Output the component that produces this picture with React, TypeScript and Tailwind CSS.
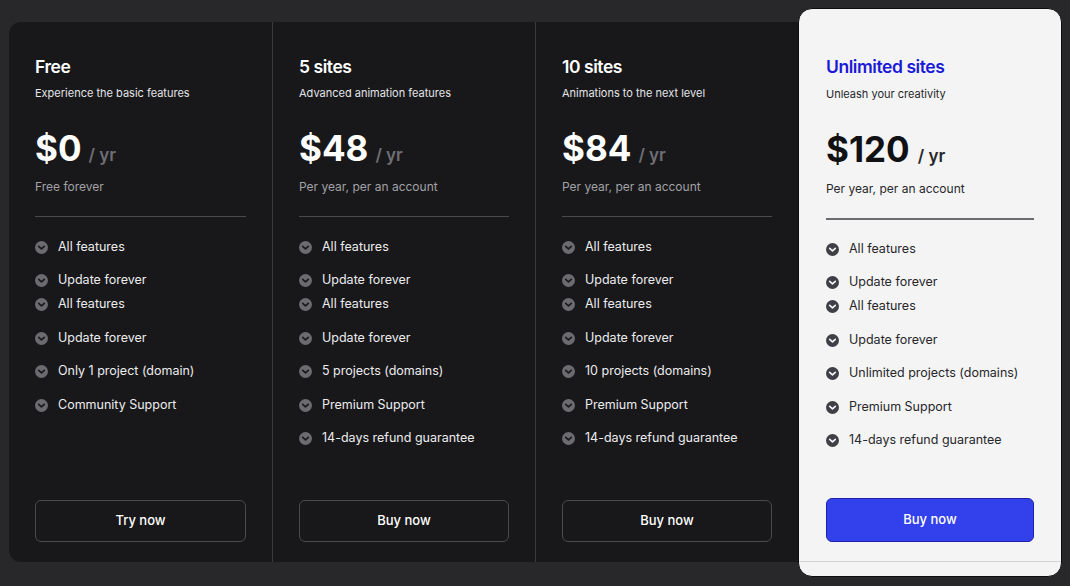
const plans = [
  { name: "Free", sub: "Experience the basic features", price: "$0", note: "Free forever", extra: ["Only 1 project (domain)", "Community Support"], cta: "Try now" },
  { name: "5 sites", sub: "Advanced animation features", price: "$48", note: "Per year, per an account", extra: ["5 projects (domains)", "Premium Support", "14-days refund guarantee"], cta: "Buy now" },
  { name: "10 sites", sub: "Animations to the next level", price: "$84", note: "Per year, per an account", extra: ["10 projects (domains)", "Premium Support", "14-days refund guarantee"], cta: "Buy now" },
];

const base = ["All features", "Update forever", "All features", "Update forever"];

function Icon({ light }: { light?: boolean }) {
  return (
    <svg width="13" height="13" viewBox="0 0 14 14" className="shrink-0">
      <circle cx="7" cy="7" r="7" fill={light ? "#3f3f46" : "#6b6b70"} />
      <path d="M4 5.8 L7 8.6 L10 5.8" fill="none" stroke={light ? "#f4f4f5" : "#1b1b1d"} strokeWidth="1.8" strokeLinecap="round" strokeLinejoin="round" />
    </svg>
  );
}

function Features({ items, light }: { items: string[]; light?: boolean }) {
  return (
    <ul className="flex flex-col">
      {items.map((f, i) => (
        <li key={i} className={`flex items-center gap-[10px] h-[24px] text-[12.5px] ${i === 0 ? "" : i === 2 ? "mt-0" : "mt-[9.5px]"} ${light ? "text-[#27272a]" : "text-[#ececee]"}`}>
          <Icon light={light} />
          <span>{f}</span>
        </li>
      ))}
    </ul>
  );
}

export default function App() {
  return (
    <div className="w-[1070px] h-[586px] bg-[#28282a] flex items-start pl-[9px] overflow-hidden" style={{ fontFamily: "Inter, 'Liberation Sans', sans-serif" }}>
      <div className="mt-[22px] h-[540px] w-[790px] bg-[#18181a] rounded-l-[12px] flex">
        {plans.map((p, i) => (
          <div key={i} className={`w-[263px] flex flex-col px-[26px] pt-[34px] pb-[20px] ${i > 0 ? "border-l border-[#3a3a3d]" : ""}`}>
            <h2 className="text-[17.5px] font-semibold text-white leading-[22px] tracking-tight">{p.name}</h2>
            <p className="text-[11px] text-[#e4e4e7] mt-[7px]">{p.sub}</p>
            <div className="flex items-baseline gap-[7px] mt-[26px]">
              <span className="text-[35px] font-bold text-white leading-[40px]">{p.price}</span>
              <span className="text-[17px] font-semibold text-[#6e6e73]">/ yr</span>
            </div>
            <p className="text-[12px] text-[#a1a1a6] mt-[10px]">{p.note}</p>
            <div className="h-px bg-[#4a4a4d] mt-[20px] mb-[18px]" />
            <Features items={[...base, ...p.extra]} />
            <button className="mt-auto h-[42px] rounded-[6px] border border-[#4a4a4d] text-white text-[13px] font-medium bg-[#18181a]">{p.cta}</button>
          </div>
        ))}
      </div>
      <div className="mt-[8px] -ml-px h-[569px] w-[264px] bg-[#f4f4f5] rounded-[14px] border border-[#0e0e10] flex flex-col">
        <div className="flex flex-col px-[27px] pt-[47px] pb-[19px] flex-1">
          <h2 className="text-[17.5px] font-semibold text-[#1a1ad6] leading-[22px] tracking-tight">Unlimited sites</h2>
          <p className="text-[11px] text-[#27272a] mt-[8px]">Unleash your creativity</p>
          <div className="flex items-baseline gap-[8px] mt-[26px]">
            <span className="text-[35px] font-bold text-[#111113] leading-[40px]">$120</span>
            <span className="text-[17px] font-semibold text-[#27272a]">/ yr</span>
          </div>
          <p className="text-[12px] text-[#27272a] mt-[11px]">Per year, per an account</p>
          <div className="h-[2px] bg-[#6b6b70] mt-[20px] mb-[17px]" />
          <Features light items={[...base, "Unlimited projects (domains)", "Premium Support", "14-days refund guarantee"]} />
          <button className="mt-auto h-[44px] rounded-[6px] border border-[#1e22a8] bg-[#3341ec] text-white text-[13px] font-medium">Buy now</button>
        </div>
        <div className="h-[15px] border-t border-[#d4d4d8]" />
      </div>
    </div>
  );
}
